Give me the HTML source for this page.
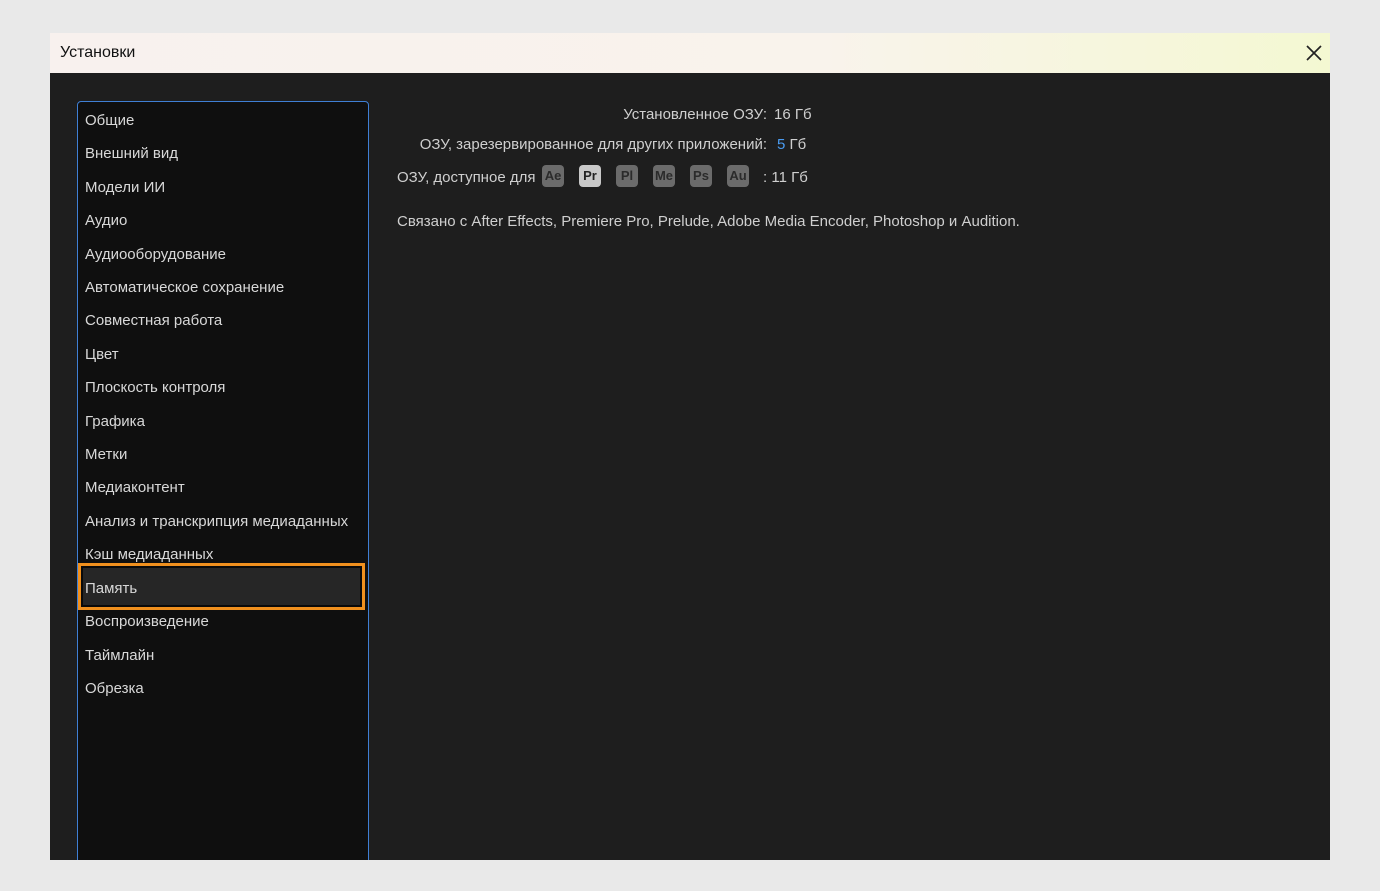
<!DOCTYPE html>
<html><head><meta charset="utf-8"><style>
body{margin:0;width:1380px;height:891px;background:#e9e9e9;position:relative;overflow:hidden;font-family:"Liberation Sans","DejaVu Sans",sans-serif;}
.win{position:absolute;left:50px;top:33px;width:1280px;height:827px;background:#1e1e1e;overflow:hidden}
.title{position:absolute;left:0;top:0;width:1280px;height:40px;background:linear-gradient(90deg,#f8f1ee 0%,#f9f3ec 60%,#f4f8d2 100%);}
.title span{position:absolute;left:10px;top:11px;font-size:16px;color:#111;}
.close{position:absolute;right:4px;top:8px;width:24px;height:24px}
.side{position:absolute;left:27px;top:68px;width:292px;height:800px;background:#0f0f0f;border:1.5px solid #3f7fd4;border-radius:4px;box-sizing:border-box}
.item{position:absolute;left:7px;font-size:15px;color:#d8d8d8;white-space:nowrap}
.hl{position:absolute;left:0;top:461px;width:287px;height:47px;box-sizing:border-box;border:3px solid #f0901e;background:#262626;box-shadow:inset 0 0 0 2px #0a0a0a}
.t{position:absolute;font-size:15px;color:#cfcfcf;white-space:nowrap}
.b{position:absolute;top:132px;width:22px;height:22px;border-radius:4px;background:#6b6b6b;color:#2b2b2b;font-weight:bold;font-size:13px;text-align:center;line-height:22px}
</style></head><body>
<div class="win">
<div class="title"><span>Установки</span>
<svg class="close" viewBox="0 0 24 24"><path d="M5 5L19 19M19 5L5 19" stroke="#222" stroke-width="1.7" fill="none"/></svg></div>
<div class="side">
<div class="hl"></div>
<div class="item" style="top:10px">Общие</div>
<div class="item" style="top:43px">Внешний вид</div>
<div class="item" style="top:77px">Модели ИИ</div>
<div class="item" style="top:110px">Аудио</div>
<div class="item" style="top:144px">Аудиооборудование</div>
<div class="item" style="top:177px">Автоматическое сохранение</div>
<div class="item" style="top:210px">Совместная работа</div>
<div class="item" style="top:244px">Цвет</div>
<div class="item" style="top:277px">Плоскость контроля</div>
<div class="item" style="top:311px">Графика</div>
<div class="item" style="top:344px">Метки</div>
<div class="item" style="top:377px">Медиаконтент</div>
<div class="item" style="top:411px">Анализ и транскрипция медиаданных</div>
<div class="item" style="top:444px">Кэш медиаданных</div>
<div class="item" style="top:478px">Память</div>
<div class="item" style="top:511px">Воспроизведение</div>
<div class="item" style="top:545px">Таймлайн</div>
<div class="item" style="top:578px">Обрезка</div>
</div>
<div class="t" style="right:563px;top:73px">Установленное ОЗУ:</div>
<div class="t" style="left:724px;top:73px">16 Гб</div>
<div class="t" style="right:563px;top:103px">ОЗУ, зарезервированное для других приложений:</div>
<div class="t" style="left:727px;top:103px"><span style="color:#4a9bf0">5</span> Гб</div>
<div class="t" style="left:347px;top:136px">ОЗУ, доступное для</div>
<div class="b" style="left:492px">Ae</div>
<div class="b" style="left:529px;background:#c8c8c8;color:#222">Pr</div>
<div class="b" style="left:566px">Pl</div>
<div class="b" style="left:603px">Me</div>
<div class="b" style="left:640px">Ps</div>
<div class="b" style="left:677px">Au</div>
<div class="t" style="left:713px;top:136px">: 11 Гб</div>
<div class="t" style="left:347px;top:180px">Связано с After Effects, Premiere Pro, Prelude, Adobe Media Encoder, Photoshop и Audition.</div>
</div>
</body></html>
